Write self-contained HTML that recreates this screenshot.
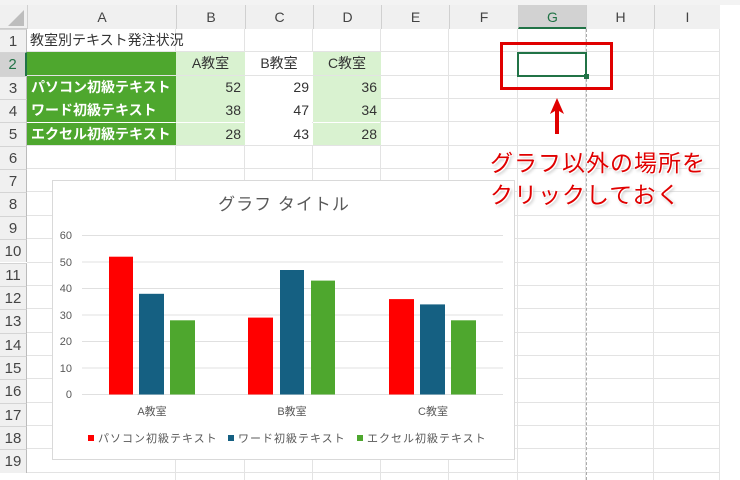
<!DOCTYPE html>
<html><head><meta charset="utf-8">
<style>
*{margin:0;padding:0;box-sizing:border-box}
body{width:740px;height:480px;position:relative;overflow:hidden;background:#fff;font-family:"Liberation Sans","Noto Sans CJK JP",sans-serif;color:#222}
.a{position:absolute}
.hd{position:absolute;background:#f0f0f0;color:#444;font-size:14px;text-align:center}
.c{position:absolute;font-size:14px;line-height:23px;white-space:nowrap}
.g{background:#4ea72e;color:#fff;font-weight:bold;padding-left:4px}
.lg{background:#d9f2d0}
.n{text-align:right;padding-right:4px;color:#333}
.ctr{text-align:center;color:#333}
.ann{position:absolute;z-index:10;color:#e00000;font-size:23px;letter-spacing:1px;text-shadow:0 0 2px #fff,1px 1px 0 #fff,-1px -1px 0 #fff,2px 2px 3px #bbb;white-space:nowrap}
</style></head><body>
<div class="a" style="left:0;top:0;width:740px;height:5px;background:#f3f3f3"></div>
<div id="grid"></div>
<script>
var cols=[27,176,245,313,381,449,518,586,654,720];
var names=["A","B","C","D","E","F","G","H","I"];
var h='';
var top0=29,rh=23.35;
h+='<div class="hd" style="left:0;top:5px;width:720px;height:24px;border-bottom:1px solid #ccc"></div>';
h+='<div class="a" style="left:8px;top:10px;width:0;height:0;border-left:16px solid transparent;border-bottom:16px solid #bdbdbd"></div>';
for(var i=0;i<9;i++){var bg=i==6?'background:#d2d2d2;color:#217346;border-bottom:2px solid #217346;':'';
h+='<div class="hd" style="left:'+cols[i]+'px;top:5px;width:'+(cols[i+1]-cols[i])+'px;height:24px;line-height:24px;border-left:1px solid #d0d0d0;'+bg+'">'+names[i]+'</div>';}
for(var r=1;r<=19;r++){var t=top0+(r-1)*rh;var bg=r==2?'background:#d2d2d2;color:#217346;border-right:2px solid #217346;':'';
h+='<div class="hd" style="left:0;top:'+t+'px;width:27px;height:'+rh+'px;line-height:'+rh+'px;border-top:1px solid #d4d4d4;border-right:1px solid #bbb;font-size:15px;'+bg+'">'+r+'</div>';
h+='<div class="a" style="left:27px;top:'+(t+rh-1)+'px;width:693px;height:1px;background:#e3e3e3"></div>';}
for(var i=1;i<10;i++){h+='<div class="a" style="left:'+(cols[i]-1)+'px;top:29px;width:1px;height:451px;background:#e3e3e3"></div>';}
document.getElementById('grid').innerHTML=h;
</script>
<div class="c" style="left:30px;top:29px;color:#333">教室別テキスト発注状況</div>
<div class="c g" style="left:27px;top:52px;width:149px;height:23px"></div>
<div class="c lg ctr" style="left:176px;top:52px;width:69px;height:23px">A教室</div>
<div class="c ctr" style="left:245px;top:52px;width:68px;height:23px;background:#fff">B教室</div>
<div class="c lg ctr" style="left:313px;top:52px;width:68px;height:23px">C教室</div>

<div class="c g" style="left:27px;top:76px;width:149px;height:23px">パソコン初級テキスト</div>
<div class="c lg n" style="left:176px;top:76px;width:69px;height:23px">52</div>
<div class="c n" style="left:245px;top:76px;width:68px;height:23px;background:#fff">29</div>
<div class="c lg n" style="left:313px;top:76px;width:68px;height:23px">36</div>

<div class="c g" style="left:27px;top:99px;width:149px;height:23px">ワード初級テキスト</div>
<div class="c lg n" style="left:176px;top:99px;width:69px;height:23px">38</div>
<div class="c n" style="left:245px;top:99px;width:68px;height:23px;background:#fff">47</div>
<div class="c lg n" style="left:313px;top:99px;width:68px;height:23px">34</div>

<div class="c g" style="left:27px;top:123px;width:149px;height:22px">エクセル初級テキスト</div>
<div class="c lg n" style="left:176px;top:123px;width:69px;height:22px">28</div>
<div class="c n" style="left:245px;top:123px;width:68px;height:22px;background:#fff">43</div>
<div class="c lg n" style="left:313px;top:123px;width:68px;height:22px">28</div>

<div class="a" style="left:586px;top:29px;width:0;height:451px;border-left:1px dashed #aaa"></div>
<div class="a" style="left:517px;top:52px;width:70px;height:25px;border:2px solid #217346;background:#fff"></div>
<div class="a" style="left:584px;top:74px;width:5px;height:5px;background:#217346"></div>
<div class="a" style="left:500px;top:42px;width:113px;height:48px;border:3px solid #e00000"></div>
<svg class="a" style="left:548px;top:96px" width="18" height="40"><path d="M9 2 L16 18 L11 15 L11 38 L7 38 L7 15 L2 18 Z" fill="#e00000"/></svg>
<div class="ann" style="left:490px;top:144px">グラフ以外の場所を</div>
<div class="ann" style="left:490px;top:176px">クリックしておく</div>

<svg class="a" style="left:52px;top:180px" width="463" height="280" font-family="Liberation Sans,Noto Sans CJK JP,sans-serif">
<rect x="0.5" y="0.5" width="462" height="279" fill="#fff" stroke="#d9d9d9"/>
<text x="232" y="30" font-size="17" fill="#595959" text-anchor="middle" letter-spacing="1">グラフ タイトル</text>
<g stroke="#e0e0e0" stroke-width="1">
<line x1="30" x2="451" y1="55.5" y2="55.5"/><line x1="30" x2="451" y1="82" y2="82"/><line x1="30" x2="451" y1="108.5" y2="108.5"/><line x1="30" x2="451" y1="135" y2="135"/><line x1="30" x2="451" y1="161.5" y2="161.5"/><line x1="30" x2="451" y1="188" y2="188"/><line x1="30" x2="451" y1="214.5" y2="214.5"/>
</g>
<g font-size="11" fill="#595959" text-anchor="end">
<text x="20" y="59">60</text><text x="20" y="86">50</text><text x="20" y="112">40</text><text x="20" y="139">30</text><text x="20" y="165">20</text><text x="20" y="192">10</text><text x="20" y="218">0</text>
</g>
<g>
<rect x="57" y="76.7" width="24" height="137.8" fill="#ff0000"/>
<rect x="87" y="113.8" width="25" height="100.7" fill="#156082"/>
<rect x="118" y="140.3" width="25" height="74.2" fill="#4ea72e"/>
<rect x="196" y="137.6" width="25" height="76.9" fill="#ff0000"/>
<rect x="228" y="90" width="24" height="124.5" fill="#156082"/>
<rect x="259" y="100.6" width="24" height="113.9" fill="#4ea72e"/>
<rect x="337" y="119.1" width="25" height="95.4" fill="#ff0000"/>
<rect x="368" y="124.4" width="25" height="90.1" fill="#156082"/>
<rect x="399" y="140.3" width="25" height="74.2" fill="#4ea72e"/>
</g>
<g font-size="11" fill="#595959" text-anchor="middle">
<text x="100" y="235">A教室</text><text x="240" y="235">B教室</text><text x="381" y="235">C教室</text>
</g>
<g font-size="11" fill="#595959" letter-spacing="1">
<rect x="36" y="255" width="6" height="6" fill="#ff0000"/><text x="46" y="262">パソコン初級テキスト</text>
<rect x="176" y="255" width="6" height="6" fill="#156082"/><text x="186" y="262">ワード初級テキスト</text>
<rect x="305" y="255" width="6" height="6" fill="#4ea72e"/><text x="315" y="262">エクセル初級テキスト</text>
</g>
</svg>
</body></html>
